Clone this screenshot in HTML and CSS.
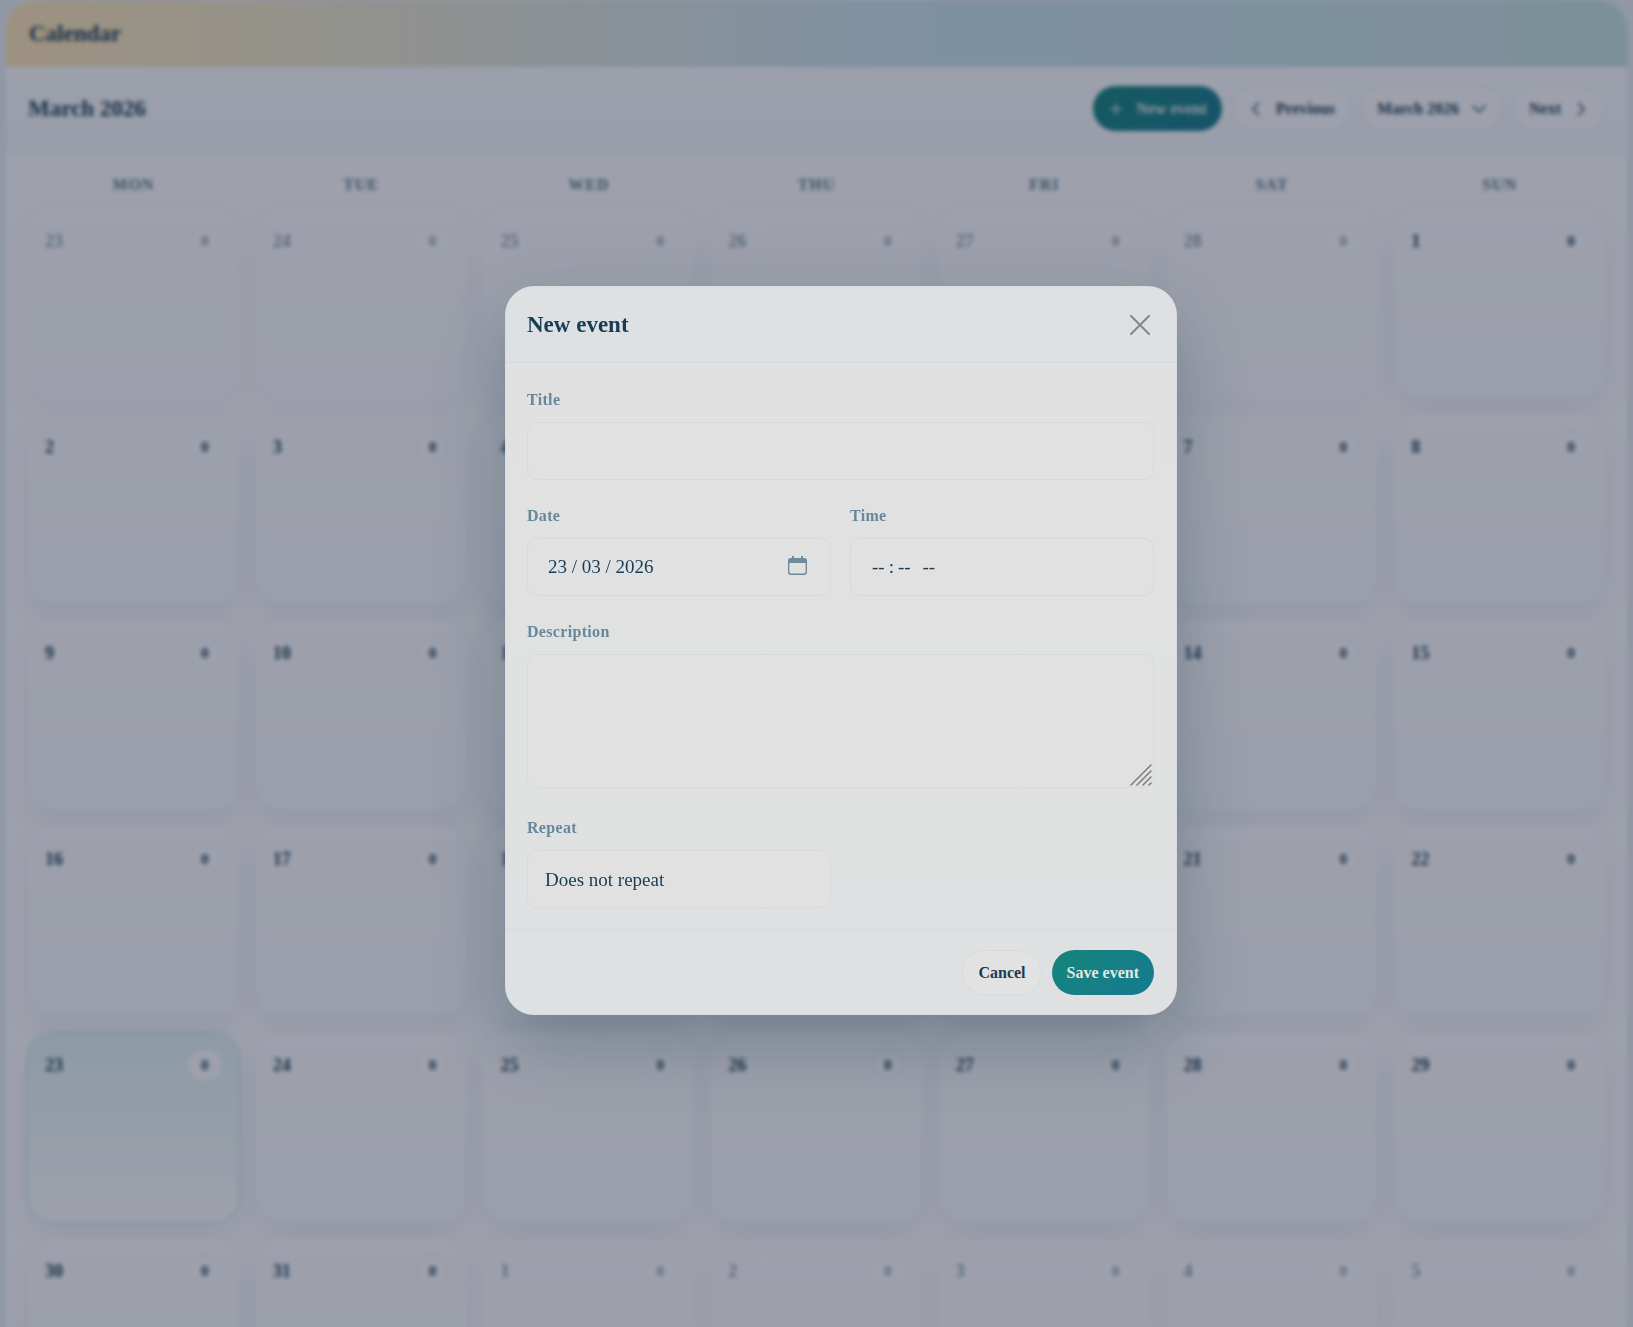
FILE: index.html
```html
<!DOCTYPE html>
<html lang="en">
<head>
    <meta charset="UTF-8">
    <meta name="viewport" content="width=device-width, initial-scale=1.0">
    <title>Calendar</title>
    <link rel="stylesheet" href="styles.css">
</head>
<body>

<main class="calendar">
    <header class="calendar-header">
        <h1>Calendar</h1>
    </header>

    <div class="toolbar">
        <h2>March 2026</h2>
        <div class="toolbar-actions">
            <button type="button" class="btn btn-primary">
                <svg class="icon" viewBox="0 0 16 16"><path d="M8 3v10M3 8h10"/></svg>
                New event
            </button>
            <button type="button" class="btn">
                <svg class="icon" viewBox="0 0 16 16"><path d="M10.500 2 5 8l5.500 6"/></svg>
                Previous
            </button>
            <button type="button" class="btn">
                March 2026
                <svg class="icon" viewBox="0 0 16 16"><path d="M2 5l6 6 6-6"/></svg>
            </button>
            <button type="button" class="btn">
                Next
                <svg class="icon" viewBox="0 0 16 16"><path d="M5.500 2 11 8l-5.500 6"/></svg>
            </button>
        </div>
    </div>

    <div class="calendar-body">
        <div class="weekdays">
            <span>Mon</span>
            <span>Tue</span>
            <span>Wed</span>
            <span>Thu</span>
            <span>Fri</span>
            <span>Sat</span>
            <span>Sun</span>
        </div>
        <div class="days" id="days"></div>
    </div>
</main>

<div class="overlay">
    <form class="modal" role="dialog" aria-labelledby="modalTitle">
        <div class="modal-header">
            <h2 id="modalTitle">New event</h2>
            <button type="button" class="btn-close" aria-label="Close">
                <svg viewBox="0 0 20 20"><path d="M1 1l18 18M19 1l-18 18"/></svg>
            </button>
        </div>

        <div class="modal-body">
            <div class="field field-full">
                <label for="title">Title</label>
                <input type="text" id="title" class="control">
            </div>
            <div class="field">
                <label for="date">Date</label>
                <div class="control-wrap">
                    <input type="text" id="date" class="control" value="23 / 03 / 2026">
                    <svg class="date-icon" viewBox="0 0 19 19">
                        <path class="date-fill" d="M4 0h2v2h7V0h2v2h1.500A2.500 2.500 0 0 1 19 4.500V7H0V4.500A2.500 2.500 0 0 1 2.500 2H4z"/>
                        <path class="date-line" d="M.700 6v9.800a2.500 2.500 0 0 0 2.500 2.500h12.600a2.500 2.500 0 0 0 2.500-2.500V6"/>
                    </svg>
                </div>
            </div>
            <div class="field">
                <label for="time">Time</label>
                <input type="time" id="time" class="control">
            </div>
            <div class="field field-full">
                <label for="description">Description</label>
                <div class="control-wrap">
                    <textarea id="description" class="control"></textarea>
                    <svg class="grip" viewBox="0 0 22 22"><path d="M1 21 21 1M7 21 21 7M13 21l8-8M19 21l2-2"/></svg>
                </div>
            </div>
            <div class="field">
                <label for="repeat">Repeat</label>
                <select id="repeat" class="control">
                    <option>Does not repeat</option>
                    <option>Daily</option>
                    <option>Weekly</option>
                    <option>Monthly</option>
                </select>
            </div>
        </div>

        <div class="modal-footer">
            <button type="button" class="btn">Cancel</button>
            <button type="button" class="btn btn-primary">Save event</button>
        </div>
    </form>
</div>

<script>
    const days = document.getElementById('days');
    const start = new Date(2026, 1, 23);

    // Six weeks, Monday first
    for (let i = 0; i < 42; i++) {
        const date = new Date(start.getFullYear(), start.getMonth(), start.getDate() + i);
        const cell = document.createElement('div');
        cell.className = 'day';
        if (date.getMonth() !== 2) cell.classList.add('day-outside');
        if (date.getMonth() === 2 && date.getDate() === 23) cell.classList.add('day-today');
        cell.innerHTML = `<span class="day-number">${date.getDate()}</span><span class="day-count">0</span>`;
        days.appendChild(cell);
    }
</script>

</body>
</html>
```

FILE: styles.css
```css
* {
    box-sizing: border-box;
}
body {
    margin: 0;
    height: 100vh;
    overflow: hidden;
    font-family: "Liberation Serif", "Times New Roman", serif;
    font-size: 16px;
    color: #173d55;
    background: #e8eef1;
}
h1, h2 {
    margin: 0;
    font-size: 23px;
    line-height: 30px;
}
.calendar {
    margin: 1px 6px 0;
    border-radius: 28px 28px 0 0;
    background: #fff;
    overflow: hidden;
}
.calendar-header {
    padding: 18px 23px;
    background: linear-gradient(90deg, #ffe6b4 0%, #cae3ef 55%, #c5e2df 100%);
}
.toolbar {
    display: flex;
    align-items: center;
    justify-content: space-between;
    padding: 19px 22px 21px;
    border-bottom: 1px solid #f2f6f8;
    background: linear-gradient(#fcfeff, #f5f9fb);
}
.toolbar-actions {
    display: flex;
    gap: 10px;
}
.btn {
    display: inline-flex;
    align-items: center;
    gap: 12px;
    height: 45px;
    padding: 0 15px;
    border: 1px solid #d3dbde;
    border-radius: 23px;
    background: #e2e2e2;
    color: #173d55;
    font-family: inherit;
    font-size: 16px;
    font-weight: bold;
    cursor: pointer;
}
.toolbar .btn {
    border-color: #dde9ed;
    background: #fff;
}
.btn.btn-primary,
.toolbar .btn.btn-primary {
    padding: 0 15px;
    border: none;
    background: linear-gradient(135deg, #14857a, #167a90);
    color: #e2e8e8;
}
.icon {
    width: 16px;
    height: 16px;
    fill: none;
    stroke: currentColor;
    stroke-width: 1.500;
    stroke-linecap: round;
    stroke-linejoin: round;
}
.calendar-body {
    padding: 22px;
}
.weekdays {
    display: grid;
    grid-template-columns: repeat(7, 1fr);
    gap: 17px;
    margin-bottom: 14px;
    text-align: center;
    text-transform: uppercase;
    font-size: 16px;
    line-height: 20px;
    font-weight: bold;
    letter-spacing: 0.06em;
    color: #557688;
}
.days {
    display: grid;
    grid-template-columns: repeat(7, 1fr);
    gap: 17px;
}
.day {
    display: flex;
    align-items: flex-start;
    justify-content: space-between;
    height: 189px;
    padding: 17px;
    border-radius: 26px;
    background: linear-gradient(#fff, #f8fbfd);
    box-shadow: 0 12px 28px rgba(28, 69, 96, 0.08);
}
.day-number {
    font-size: 18px;
    line-height: 30px;
    font-weight: bold;
}
.day-count {
    width: 34px;
    height: 30px;
    border: 1px solid #dfeaee;
    border-radius: 15px;
    background: #fff;
    text-align: center;
    font-size: 15px;
    line-height: 28px;
    font-weight: bold;
}
.day-outside {
    opacity: 0.5;
}
.day-today {
    background: linear-gradient(#e2f4f2, #fff);
    box-shadow: 0 0 0 2px #d3ebe9, 0 12px 28px rgba(28, 69, 96, 0.08);
}
.day-today .day-count {
    border-color: #fff;
}

.overlay {
    position: fixed;
    inset: 0;
    display: flex;
    align-items: center;
    justify-content: center;
    padding: 0 0 26px 49px;
    background: rgba(24, 32, 58, 0.42);
    backdrop-filter: blur(2px);
}
.modal {
    width: 672px;
    border: 1px solid #d9dcdf;
    border-radius: 29px;
    background: linear-gradient(#e0e0e0, #e0e2e1 50%, #dee0e2);
    box-shadow: 0 28px 70px rgba(28, 60, 80, 0.3);
    overflow: hidden;
}
.modal-header {
    display: flex;
    align-items: center;
    justify-content: space-between;
    padding: 23px 22px 22px 21px;
    border-bottom: 1px solid #d2dade;
    background: linear-gradient(#dfe0e2, #dce1e2);
}
.btn-close {
    display: flex;
    padding: 4px;
    border: none;
    background: none;
    cursor: pointer;
}
.btn-close svg {
    width: 20px;
    height: 20px;
    stroke: #858788;
    stroke-width: 2;
    stroke-linecap: round;
}
.modal-body {
    display: grid;
    grid-template-columns: 1fr 1fr;
    gap: 26px 19px;
    padding: 27px 22px 21px 21px;
}
.field-full {
    grid-column: 1 / -1;
}
.field label {
    display: block;
    margin-bottom: 12px;
    font-size: 16px;
    line-height: 20px;
    font-weight: bold;
    letter-spacing: 0.02em;
    color: #66889a;
}
.control-wrap {
    position: relative;
}
.control {
    display: block;
    width: 100%;
    height: 58px;
    padding: 0 20px;
    border: 1px solid #d3dbde;
    border-radius: 10px;
    background: #e1e1e1;
    color: #173d55;
    font-family: inherit;
    font-size: 19px;
    outline: none;
}
textarea.control {
    height: 134px;
    margin-bottom: 4px;
    padding: 16px 20px;
    resize: none;
}
select.control {
    padding: 0 17px;
    appearance: none;
}
input[type="time"]::-webkit-datetime-edit-text {
    padding: 0 3px;
}
input[type="time"]::-webkit-calendar-picker-indicator {
    display: none;
}
.date-icon {
    position: absolute;
    top: 18px;
    right: 24px;
    width: 19px;
    height: 19px;
}
.date-fill {
    fill: #6d8b9b;
}
.date-line {
    fill: none;
    stroke: #6d8b9b;
    stroke-width: 1.400;
}
.grip {
    position: absolute;
    right: 2px;
    bottom: 2px;
    width: 22px;
    height: 22px;
    stroke: #7f7f7f;
    stroke-width: 1.600;
    stroke-linecap: round;
}
.modal-footer {
    display: flex;
    justify-content: flex-end;
    gap: 10px;
    padding: 20px 22px 19px;
    border-top: 1px solid #d6dadc;
    background: #dee0e2;
}
```
